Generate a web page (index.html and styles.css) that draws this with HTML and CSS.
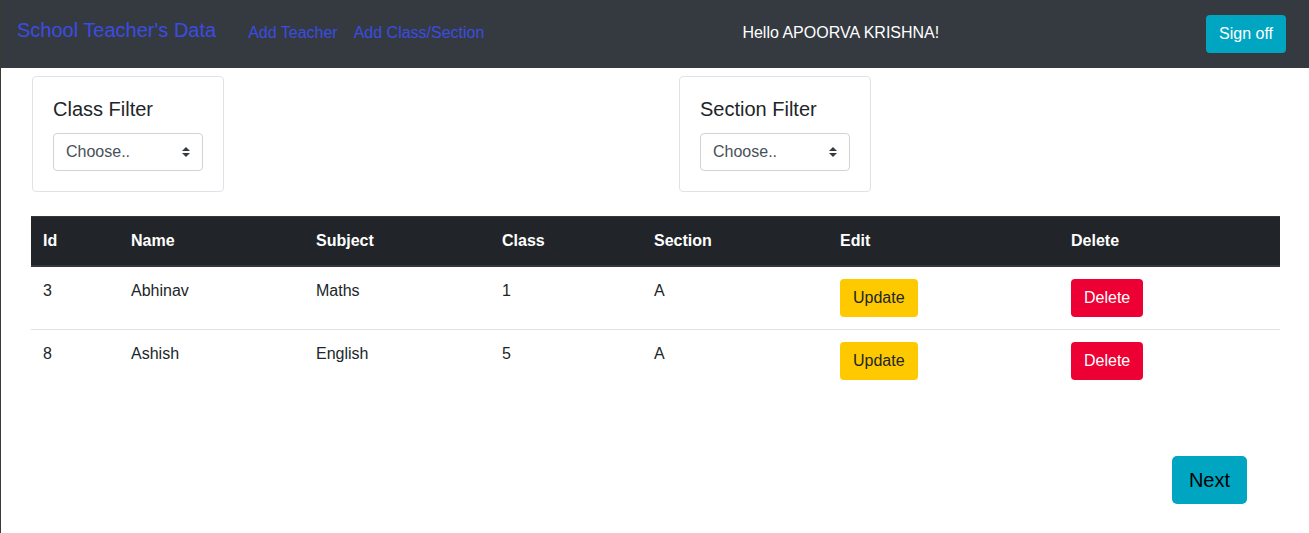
FILE: index.html
```html
<!DOCTYPE html>
<html lang="en">
<head>
<meta charset="utf-8">
<title>School Teacher's Data</title>
<link rel="stylesheet" href="styles.css">
</head>
<body>
<nav class="navbar">
  <a class="brand" href="#">School Teacher's Data</a>
  <div class="nav-links">
    <a class="nav-link" href="#">Add Teacher</a>
    <a class="nav-link" href="#">Add Class/Section</a>
  </div>
  <span class="hello">Hello APOORVA KRISHNA!</span>
  <button class="btn btn-info btn-signoff">Sign off</button>
</nav>
<main class="content">
  <div class="filters">
    <div class="filter-col">
      <div class="card">
        <h5 class="card-title">Class Filter</h5>
        <select class="custom-select"><option>Choose..</option></select>
      </div>
    </div>
    <div class="filter-col">
      <div class="card">
        <h5 class="card-title">Section Filter</h5>
        <select class="custom-select"><option>Choose..</option></select>
      </div>
    </div>
  </div>
  <table class="table">
    <colgroup>
      <col class="c-id"><col class="c-name"><col class="c-subject"><col class="c-class"><col class="c-section"><col class="c-edit"><col class="c-delete">
    </colgroup>
    <thead>
      <tr><th>Id</th><th>Name</th><th>Subject</th><th>Class</th><th>Section</th><th>Edit</th><th>Delete</th></tr>
    </thead>
    <tbody>
      <tr><td>3</td><td>Abhinav</td><td>Maths</td><td>1</td><td>A</td><td><button class="btn btn-warning">Update</button></td><td><button class="btn btn-danger">Delete</button></td></tr>
      <tr><td>8</td><td>Ashish</td><td>English</td><td>5</td><td>A</td><td><button class="btn btn-warning">Update</button></td><td><button class="btn btn-danger">Delete</button></td></tr>
    </tbody>
  </table>
  <div class="pager">
    <button class="btn btn-info btn-lg">Next</button>
  </div>
</main>
</body>
</html>
```

FILE: styles.css
```css
* { box-sizing: border-box; }
html, body { height: 100%; }
body {
  margin: 0;
  font-family: "Liberation Sans", Arial, sans-serif;
  font-size: 16px;
  line-height: 24px;
  color: #212529;
  background: #fff;
  border-left: 1px solid #3b3b33;
}
.navbar {
  display: flex;
  align-items: center;
  height: 68px;
  padding: 0 23px 0 16px;
  background: #343a40;
}
.brand {
  font-size: 20px;
  line-height: 30px;
  color: #3b4de0;
  text-decoration: none;
  margin-bottom: 9px;
  white-space: nowrap;
}
.nav-links {
  display: flex;
  margin-left: 24px;
  margin-bottom: 2px;
}
.nav-link {
  color: #3b4de0;
  text-decoration: none;
  padding: 0 8px;
}
.hello {
  color: #fff;
  margin-left: 250px;
  margin-bottom: 2px;
  white-space: nowrap;
}
.btn {
  display: inline-block;
  font-family: inherit;
  font-size: 16px;
  line-height: 24px;
  padding: 6px 12px;
  border: 1px solid transparent;
  border-radius: 4px;
  cursor: pointer;
}
.btn-info { background: #00a6c1; color: #fff; }
.btn-signoff { margin-left: auto; margin-top: -1px; }
.btn-warning { background: #ffc900; color: #212529; }
.btn-danger { background: #ed0033; color: #fff; }
.btn-lg {
  font-size: 20px;
  line-height: 30px;
  padding: 8px 16px;
  border-radius: 5px;
  color: #000;
}
.content {
  padding: 8px 28px 0 30px;
}
.filters {
  display: grid;
  grid-template-columns: 647px 1fr;
  margin-left: 1px;
}
.filter-col { display: flex; }
.card {
  border: 1px solid #dfe2e6;
  border-radius: 4px;
  padding: 20px;
}
.card-title {
  margin: 0 0 12px;
  font-size: 20px;
  font-weight: 500;
  line-height: 24px;
}
.custom-select {
  display: block;
  width: 150px;
  height: 38px;
  padding: 6px 28px 6px 12px;
  font-family: inherit;
  font-size: 16px;
  line-height: 24px;
  color: #495057;
  border: 1px solid #ced4da;
  border-radius: 4px;
  -webkit-appearance: none;
  appearance: none;
  background: #fff url("data:image/svg+xml,%3csvg xmlns='http://www.w3.org/2000/svg' width='4' height='5' viewBox='0 0 4 5'%3e%3cpath fill='%23343a40' d='M2 0L0 2h4zm0 5L0 3h4z'/%3e%3c/svg%3e") no-repeat right 12px center / 8px 10px;
}
.table {
  width: 1249px;
  margin-top: 24px;
  border-collapse: collapse;
  table-layout: fixed;
}
.c-id { width: 88px; }
.c-name { width: 185px; }
.c-subject { width: 186px; }
.c-class { width: 152px; }
.c-section { width: 186px; }
.c-edit { width: 231px; }
.c-delete { width: 221px; }
.table th, .table td {
  padding: 12px;
  text-align: left;
  vertical-align: top;
}
.table thead th {
  background: #212529;
  color: #fff;
  font-weight: bold;
  border-top: 1px solid #32383e;
  border-bottom: 2px solid #32383e;
}
.table tbody td {
  border-top: 1px solid #dee2e6;
}
.table tbody tr:first-child td { border-top-color: transparent; }
.pager {
  display: flex;
  justify-content: flex-end;
  margin-top: 64px;
  padding-right: 34px;
}
```
